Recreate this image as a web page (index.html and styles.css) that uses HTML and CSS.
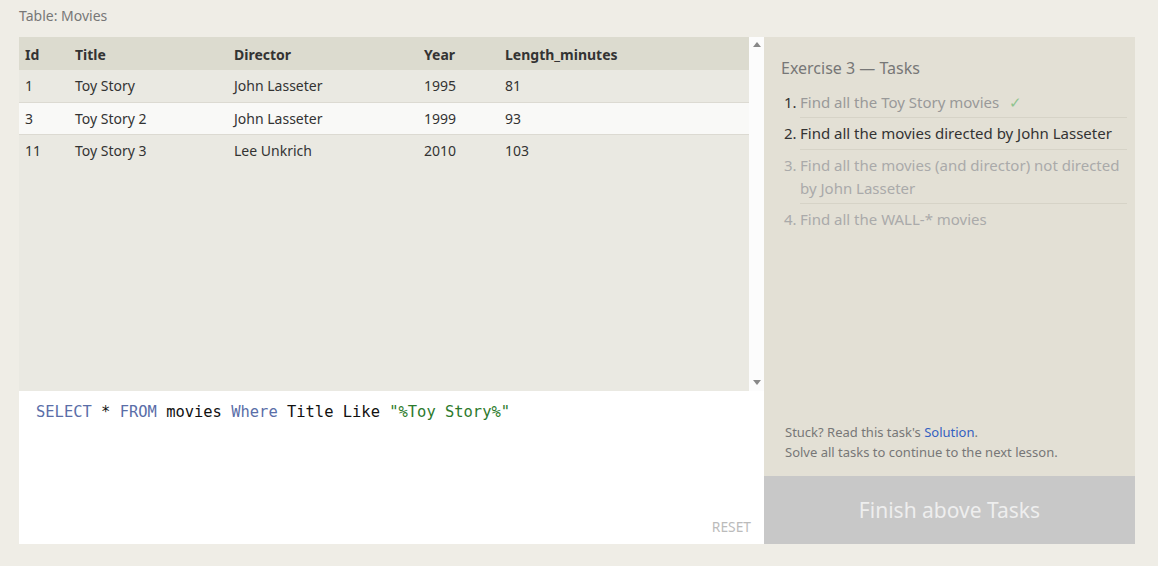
FILE: index.html
```html
<!DOCTYPE html>
<html>
<head>
<meta charset="utf-8">
<link rel="stylesheet" href="styles.css">
</head>
<body>
<div class="page">
  <div class="caption">Table: Movies</div>
  <div class="main">
    <div class="left">
      <div class="results">
        <div class="tablewrap">
          <table class="grid">
            <colgroup><col class="c-id"><col class="c-title"><col class="c-dir"><col class="c-year"><col></colgroup>
            <thead>
              <tr><th>Id</th><th>Title</th><th>Director</th><th>Year</th><th>Length_minutes</th></tr>
            </thead>
            <tbody>
              <tr><td>1</td><td>Toy Story</td><td>John Lasseter</td><td>1995</td><td>81</td></tr>
              <tr class="alt"><td>3</td><td>Toy Story 2</td><td>John Lasseter</td><td>1999</td><td>93</td></tr>
              <tr><td>11</td><td>Toy Story 3</td><td>Lee Unkrich</td><td>2010</td><td>103</td></tr>
            </tbody>
          </table>
        </div>
        <div class="scrollbar">
          <span class="arrow up"></span>
          <span class="arrow down"></span>
        </div>
      </div>
      <div class="editor">
        <div class="code"><span class="kw">SELECT</span> * <span class="kw">FROM</span> movies <span class="kw">Where</span> Title Like <span class="str">"%Toy Story%"</span></div>
        <div class="reset">RESET</div>
      </div>
    </div>
    <div class="right">
      <div class="tasks">
        <div class="heading">Exercise 3 — Tasks</div>
        <ol class="tasklist">
          <li class="done"><span class="num">1.</span><span class="txt">Find all the Toy Story movies <span class="check">✓</span></span></li>
          <li class="current"><span class="num">2.</span><span class="txt">Find all the movies directed by John Lasseter</span></li>
          <li class="todo"><span class="num">3.</span><span class="txt">Find all the movies (and director) not directed by John Lasseter</span></li>
          <li class="todo last"><span class="num">4.</span><span class="txt">Find all the WALL-* movies</span></li>
        </ol>
        <div class="help">
          <div>Stuck? Read this task's <span class="link">Solution</span>.</div>
          <div>Solve all tasks to continue to the next lesson.</div>
        </div>
      </div>
      <div class="finish">Finish above Tasks</div>
    </div>
  </div>
</div>
</body>
</html>
```
FILE: styles.css
```css
html, body {
  margin: 0;
  padding: 0;
  background: #efede6;
}
body {
  font-family: "Noto Sans", "Open Sans", sans-serif;
  color: #333;
}
.page {
  padding: 5px 23px 0 19px;
}
.caption {
  font-size: 14px;
  color: #777;
  line-height: 22px;
  height: 32px;
}
.main {
  display: flex;
  height: 507px;
  width: 1116px;
}
.left {
  width: 745px;
  display: flex;
  flex-direction: column;
}
.results {
  height: 354px;
  display: flex;
  background: #eae9e2;
}
.tablewrap {
  flex: 1;
}
.grid {
  border-collapse: collapse;
  table-layout: fixed;
  width: 100%;
  font-size: 14px;
}
.grid th {
  text-align: left;
  font-weight: bold;
  background: #dcdbcf;
  height: 33px;
  padding: 1px 0 0 6px;
  color: #333;
  box-sizing: border-box;
}
.grid td {
  height: 32px;
  padding: 0 0 0 6px;
  border-bottom: 1px solid #dcdad2;
  color: #333;
  box-sizing: border-box;
}
.grid tbody tr:last-child td {
  border-bottom: none;
}
.grid tr.alt td {
  background: #f9f9f7;
}
.c-id { width: 50px; }
.c-title { width: 159px; }
.c-dir { width: 190px; }
.c-year { width: 81px; }
.scrollbar {
  width: 15px;
  background: #fcfcfc;
  display: flex;
  flex-direction: column;
  justify-content: space-between;
  align-items: center;
  padding: 5px 0 6px;
  box-sizing: border-box;
}
.arrow {
  width: 0;
  height: 0;
  border-left: 4px solid transparent;
  border-right: 4px solid transparent;
}
.arrow.up { border-bottom: 5px solid #888; }
.arrow.down { border-top: 5px solid #888; }
.editor {
  flex: 1;
  background: #fff;
  display: flex;
  flex-direction: column;
  justify-content: space-between;
  padding: 11px 13px 8px 17px;
}
.code {
  font-family: "DejaVu Sans Mono", "Liberation Mono", monospace;
  font-size: 15.45px;
  color: #111;
  line-height: 20px;
}
.kw { color: #5a6ea8; }
.str { color: #2c7a2c; }
.reset {
  align-self: flex-end;
  font-size: 13.8px;
  color: #bbb;
  line-height: 18px;
}
.right {
  width: 371px;
  display: flex;
  flex-direction: column;
  background: #e3e0d5;
}
.tasks {
  flex: 1;
  padding: 21px 8px 14px 17px;
  display: flex;
  flex-direction: column;
}
.heading {
  font-size: 16px;
  color: #777;
  line-height: 20px;
  margin-bottom: 8.5px;
}
.tasklist {
  list-style: none;
  margin: 0;
  padding: 0;
  font-size: 15px;
}
.tasklist li {
  display: flex;
  align-items: baseline;
  line-height: 23px;
}
.num {
  width: 16px;
  padding-left: 3px;
  flex: none;
}
.txt {
  flex: 1;
  padding: 4px 0 3.5px;
  border-bottom: 1px solid #d6d3c7;
}
.tasklist li.last .txt { border-bottom: none; }
.done .num { color: #333; }
.done .txt { color: #999; }
.check { color: #8fc48f; margin-left: 6px; }
.current { color: #333; }
.todo { color: #aaa; }
.help {
  margin-top: auto;
  font-size: 13px;
  color: #777;
  line-height: 20px;
  padding-left: 4px;
}
.link { color: #3461c1; }
.finish {
  height: 68px;
  background: #c8c8c8;
  color: #eeeeee;
  font-size: 21px;
  display: flex;
  align-items: center;
  justify-content: center;
}
```
